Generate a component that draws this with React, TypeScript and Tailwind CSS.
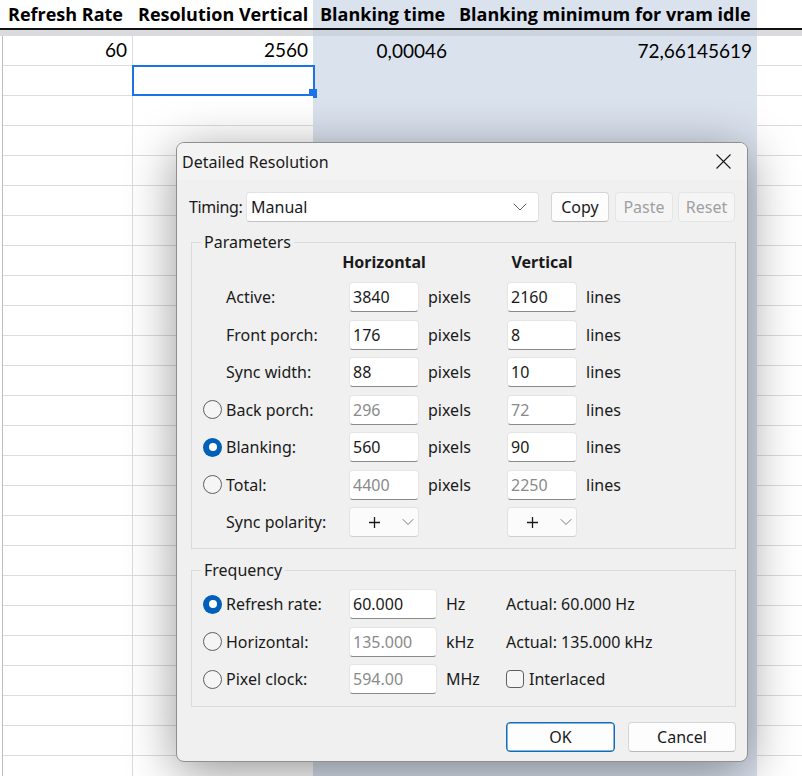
import { ChevronDown } from "lucide-react";

const gridLine = "border-[#dcdcdc]";

function SheetRow({ a, b, c, d, selected }: { a?: string; b?: string; c?: string; d?: string; selected?: boolean }) {
  return (
    <div className="flex h-[30px] shrink-0">
      <div className="w-[3px] border-r border-[#bdbdbd] bg-white" />
      <div className={`w-[130px] border-r border-b ${gridLine} bg-white flex items-center justify-end pr-[5px]`}>{a}</div>
      <div className={`relative w-[180px] border-b ${gridLine} bg-white flex items-center justify-end pr-[5px]`}>
        {b}
        {selected && (
          <>
            <div className="absolute left-[-1px] top-[-1px] w-[183px] h-[31px] border-2 border-[#1a73e8]" />
            <div className="absolute left-[176px] top-[23px] w-[8px] h-[9px] bg-[#1a73e8]" />
          </>
        )}
      </div>
      <div className="w-[139px] bg-[#dae2ee] flex items-center justify-end pr-[5px]">{c}</div>
      <div className="w-[305px] bg-[#dae2ee] flex items-center justify-end pr-[5px]">{d}</div>
      <div className={`flex-1 border-b ${gridLine} bg-white`} />
    </div>
  );
}

function Sheet() {
  return (
    <div className="flex flex-col h-[776px] overflow-hidden font-['Lato',sans-serif] text-[19px] text-black">
      <div className="flex h-[28px] shrink-0 font-bold font-['Open_Sans',sans-serif] text-[18px]">
        <div className="w-[3px] bg-white" />
        <div className="w-[130px] bg-white flex items-center pl-[5px] whitespace-nowrap">Refresh Rate</div>
        <div className="w-[180px] bg-white flex items-center pl-[5px] whitespace-nowrap">Resolution Vertical</div>
        <div className="w-[139px] bg-[#dae2ee] flex items-center pl-[7px] whitespace-nowrap">Blanking time</div>
        <div className="w-[305px] bg-[#dae2ee] flex items-center pl-[7px] whitespace-nowrap">Blanking minimum for vram idle</div>
        <div className="flex-1 bg-white" />
      </div>
      <div className="h-[2px] shrink-0 bg-[#111]" />
      <div className="flex h-[6px] shrink-0">
        <div className="w-[313px] bg-[#d9dbdf]" />
        <div className="w-[444px] bg-[#ccd4df]" />
        <div className="flex-1 bg-[#d9dbdf]" />
      </div>
      <SheetRow a="60" b="2560" c="0,00046" d="72,66145619" />
      <SheetRow selected />
      {Array.from({ length: 24 }).map((_, i) => (
        <SheetRow key={i} />
      ))}
    </div>
  );
}

function Field({ value, disabled, wide }: { value: string; disabled?: boolean; wide?: boolean }) {
  return (
    <div
      className={`${wide ? "w-[88px]" : "w-[70px]"} h-[30px] shrink-0 flex items-center pl-[3px] bg-white border border-[#e5e5e5] border-b-[#8a8a8a] rounded-[4px] ${
        disabled ? "text-[#8a8a8a]" : "text-[#1a1a1a]"
      }`}
    >
      {value}
    </div>
  );
}

function Radio({ checked }: { checked?: boolean }) {
  return checked ? (
    <span className="w-[19px] h-[19px] rounded-full bg-[#005fb8] flex items-center justify-center">
      <span className="w-[8px] h-[8px] rounded-full bg-white" />
    </span>
  ) : (
    <span className="w-[19px] h-[19px] rounded-full border border-[#5f5f5f] bg-[#f5f5f5] block" />
  );
}

function Polarity() {
  return (
    <div className="w-[70px] h-[30px] shrink-0 flex items-center bg-[#fbfbfb] border border-[#e2e2e2] border-b-[#cfcfcf] rounded-[4px]">
      <span className="w-[48px] flex justify-center">
        <svg width="11" height="11" viewBox="0 0 11 11">
          <path d="M5.5 0 V11 M0 5.5 H11" stroke="#1a1a1a" strokeWidth="1.3" />
        </svg>
      </span>
      <ChevronDown size={20} strokeWidth={1} color="#5f5f5f" />
    </div>
  );
}

type ParamProps = { radio?: boolean; label: string; h: string; v: string; dis?: boolean };

function ParamRow({ radio, label, h, v, dis }: ParamProps) {
  return (
    <div className="flex items-center h-[30px]">
      <div className="w-[34px] pl-[11px] flex items-center">{radio !== undefined && <Radio checked={radio} />}</div>
      <div className="w-[123px]">{label}</div>
      <Field value={h} disabled={dis} />
      <div className="w-[88px] pl-[9px]">pixels</div>
      <Field value={v} disabled={dis} />
      <div className="pl-[9px]">lines</div>
    </div>
  );
}

function Btn({ label, w, disabled, primary }: { label: string; w: string; disabled?: boolean; primary?: boolean }) {
  let look = "bg-[#fdfdfd] border-[#d5d5d5] border-b-[#b9b9b9] text-[#1a1a1a]";
  if (disabled) look = "bg-[#f5f5f5] border-[#e5e5e5] text-[#a0a0a0]";
  if (primary) look = "bg-[#fdfdfd] border-[#0f6cbd] shadow-[inset_0_0_0_0.5px_#0f6cbd] text-[#1a1a1a]";
  return (
    <div className={`${w} h-[30px] shrink-0 flex items-center justify-center border rounded-[4px] ${look}`}>{label}</div>
  );
}

function Dialog() {
  return (
    <div className="absolute left-[176px] top-[142px] w-[572px] h-[620px] flex flex-col bg-[#f0f0f0] border border-[#8f8f8f] rounded-[8px] overflow-hidden shadow-[0_10px_50px_rgba(0,0,0,0.42)] font-['Noto_Sans',sans-serif] text-[16px] leading-[20px] text-[#1a1a1a]">
      <div className="h-[37px] shrink-0 flex items-center justify-between bg-[#f3f3f3] pl-[5px]">
        <span>Detailed Resolution</span>
        <div className="w-[48px] flex justify-center">
          <svg width="15" height="15" viewBox="0 0 15 15">
            <path d="M0.5 0.5 L14.5 14.5 M14.5 0.5 L0.5 14.5" stroke="#1a1a1a" strokeWidth="1.1" />
          </svg>
        </div>
      </div>
      <div className="flex flex-col pl-[12px] pr-[11px] pt-[12px]">
        <div className="flex items-center h-[30px]">
          <div className="w-[57px] tracking-[-0.4px]">Timing:</div>
          <div className="w-[293px] h-[30px] flex items-center justify-between pl-[4px] pr-[6px] bg-white border border-[#e2e2e2] border-b-[#c2c2c2] rounded-[4px]">
            <span>Manual</span>
            <ChevronDown size={24} strokeWidth={1} color="#5f5f5f" />
          </div>
          <div className="ml-[12px]"><Btn label="Copy" w="w-[58px]" /></div>
          <div className="ml-[6px]"><Btn label="Paste" w="w-[58px]" disabled /></div>
          <div className="ml-[5px]"><Btn label="Reset" w="w-[57px]" disabled /></div>
        </div>

        <fieldset className="mt-[10px] ml-[2px] border border-[#dadada] pb-[11px]">
          <legend className="ml-[9px] px-[3px] leading-[20px]">Parameters</legend>
          <div className="flex h-[20px] items-center font-bold">
            <div className="w-[157px]" />
            <div className="w-[70px] flex justify-center whitespace-nowrap">Horizontal</div>
            <div className="w-[88px]" />
            <div className="w-[70px] flex justify-center whitespace-nowrap">Vertical</div>
          </div>
          <div className="flex flex-col gap-[7.5px] mt-[10px]">
            <ParamRow label="Active:" h="3840" v="2160" />
            <ParamRow label="Front porch:" h="176" v="8" />
            <ParamRow label="Sync width:" h="88" v="10" />
            <ParamRow radio={false} label="Back porch:" h="296" v="72" dis />
            <ParamRow radio label="Blanking:" h="560" v="90" />
            <ParamRow radio={false} label="Total:" h="4400" v="2250" dis />
            <div className="flex items-center h-[30px]">
              <div className="w-[34px]" />
              <div className="w-[123px]">Sync polarity:</div>
              <Polarity />
              <div className="w-[88px]" />
              <Polarity />
            </div>
          </div>
        </fieldset>

        <fieldset className="mt-[11px] ml-[2px] border border-[#dadada] pt-[9px] pb-[12px]">
          <legend className="ml-[9px] px-[3px] leading-[20px]">Frequency</legend>
          <div className="flex flex-col gap-[7.5px]">
            <div className="flex items-center h-[30px]">
              <div className="w-[34px] pl-[11px] flex items-center"><Radio checked /></div>
              <div className="w-[123px]">Refresh rate:</div>
              <Field value="60.000" wide />
              <div className="w-[69px] pl-[9px]">Hz</div>
              <div>Actual: 60.000 Hz</div>
            </div>
            <div className="flex items-center h-[30px]">
              <div className="w-[34px] pl-[11px] flex items-center"><Radio /></div>
              <div className="w-[123px]">Horizontal:</div>
              <Field value="135.000" wide disabled />
              <div className="w-[69px] pl-[9px]">kHz</div>
              <div>Actual: 135.000 kHz</div>
            </div>
            <div className="flex items-center h-[30px]">
              <div className="w-[34px] pl-[11px] flex items-center"><Radio /></div>
              <div className="w-[123px]">Pixel clock:</div>
              <Field value="594.00" wide disabled />
              <div className="w-[69px] pl-[9px]">MHz</div>
              <div className="flex items-center">
                <span className="w-[18px] h-[18px] rounded-[4px] border border-[#5f5f5f] bg-[#f5f5f5] block" />
                <span className="ml-[5px]">Interlaced</span>
              </div>
            </div>
          </div>
        </fieldset>

        <div className="flex justify-end mt-[15px]">
          <Btn label="OK" w="w-[109px]" primary />
          <div className="ml-[13px]"><Btn label="Cancel" w="w-[108px]" /></div>
        </div>
      </div>
    </div>
  );
}

export default function App() {
  return (
    <div className="relative w-[802px] h-[776px] overflow-hidden bg-white">
      <Sheet />
      <Dialog />
    </div>
  );
}
